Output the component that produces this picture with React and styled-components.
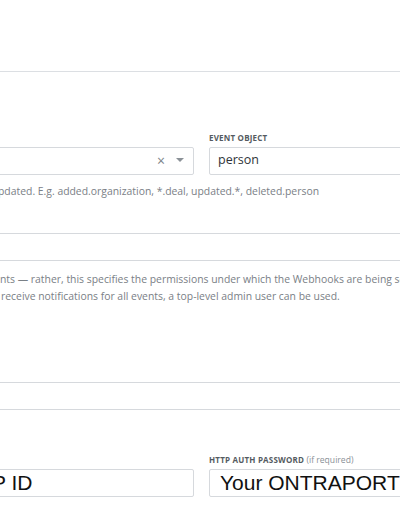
import React from 'react';
import styled, { createGlobalStyle } from 'styled-components';

const GlobalStyle = createGlobalStyle`
  html, body {
    margin: 0;
    padding: 0;
    background: #ffffff;
  }
  body {
    font-family: "Open Sans", "Noto Sans", sans-serif;
    color: #333;
  }
`;

const Page = styled.div`
  width: 400px;
  height: 516px;
  overflow: hidden;
  position: relative;
`;

const Divider = styled.div`
  height: 1px;
  background: #dcdfe3;
  margin-top: ${(p) => p.top || 0}px;
`;

const Columns = styled.div`
  display: grid;
  grid-template-columns: 194px 260px;
  column-gap: 15px;
  margin-top: ${(p) => p.top || 0}px;
`;

const Field = styled.div`
  display: flex;
  flex-direction: column;
`;

const Label = styled.div`
  font-size: 8px;
  font-weight: 700;
  color: #555b61;
  text-transform: uppercase;
  letter-spacing: 0.2px;
  height: 11px;
  line-height: 11px;
  margin-bottom: 4px;
  white-space: nowrap;

  span {
    font-size: 8.6px;
    font-weight: 400;
    text-transform: none;
    letter-spacing: 0;
    color: #8a9096;
  }
`;

const Box = styled.div`
  height: 28px;
  box-sizing: border-box;
  border: 1px solid #d6d9dd;
  border-radius: 2px;
  display: flex;
  align-items: center;
  padding: 0 ${(p) => (p.bleed ? 0 : 8)}px;
  margin-left: ${(p) => (p.bleed ? -10 : 0)}px;
  margin-right: ${(p) => (p.bleed === 'both' ? -10 : 0)}px;
  overflow: hidden;
  background: #fff;
`;

const WideBox = styled(Box)`
  margin-top: ${(p) => p.top || 0}px;
  height: 28px;
`;

const Value = styled.span`
  font-size: 12.5px;
  color: #2f3439;
  line-height: 1;
  padding-bottom: 1px;
`;

const BigValue = styled.span`
  font-family: "Liberation Sans", Arial, sans-serif;
  font-size: 21px;
  color: #111;
  white-space: nowrap;
  margin-left: ${(p) => p.shift || 0}px;
`;

const SelectControls = styled.div`
  margin-left: auto;
  display: flex;
  align-items: center;
  gap: 11px;
  padding-right: 9px;
`;

const Clear = styled.span`
  font-size: 14px;
  line-height: 1;
  color: #7d8389;
`;

const Caret = styled.span`
  width: 0;
  height: 0;
  border-left: 4px solid transparent;
  border-right: 4px solid transparent;
  border-top: 4px solid #8b9197;
  margin-top: -2px;
`;

const Help = styled.div`
  font-size: 10.4px;
  color: #7a8086;
  white-space: nowrap;
  line-height: ${(p) => p.lh || 14}px;
  margin-top: ${(p) => p.top || 0}px;
  margin-left: ${(p) => p.shift || 0}px;
`;

export default function App() {
  return (
    <Page>
      <GlobalStyle />
      <Divider top={71} />

      <Columns top={60}>
        <Field>
          <Label>&nbsp;</Label>
          <Box bleed="left">
            <SelectControls>
              <Clear>×</Clear>
              <Caret />
            </SelectControls>
          </Box>
        </Field>
        <Field>
          <Label>Event object</Label>
          <Box>
            <Value>person</Value>
          </Box>
        </Field>
      </Columns>

      <Help top={9} shift={-2}>
        pdated. E.g. added.organization, *.deal, updated.*, deleted.person
      </Help>

      <WideBox bleed="both" top={35} />

      <Help top={10} lh={17}>
        nts — rather, this specifies the permissions under which the Webhooks are being sent
      </Help>
      <Help lh={17} shift={1}>
        receive notifications for all events, a top-level admin user can be used.
      </Help>

      <WideBox bleed="both" top={77} />

      <Columns top={44}>
        <Field>
          <Label>&nbsp;</Label>
          <Box bleed="left">
            <BigValue shift={1}>P ID</BigValue>
          </Box>
        </Field>
        <Field>
          <Label>
            HTTP auth password <span>(if required)</span>
          </Label>
          <Box>
            <BigValue shift={2}>Your ONTRAPORT APP KEY</BigValue>
          </Box>
        </Field>
      </Columns>
    </Page>
  );
}
